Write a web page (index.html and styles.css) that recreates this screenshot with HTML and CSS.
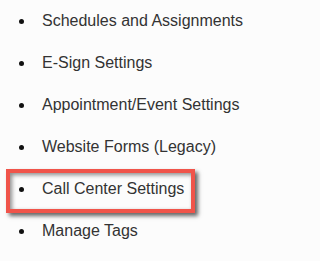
FILE: index.html
```html
<!DOCTYPE html>
<html>
<head>
<meta charset="utf-8">
<link rel="stylesheet" href="styles.css">
</head>
<body>
<ul class="menu">
  <li class="item">Schedules and Assignments</li>
  <li class="item">E-Sign Settings</li>
  <li class="item">Appointment/Event Settings</li>
  <li class="item">Website Forms (Legacy)</li>
  <li class="item highlight">Call Center Settings</li>
  <li class="item">Manage Tags</li>
</ul>
</body>
</html>
```
FILE: styles.css
```css
html, body {
  margin: 0;
  padding: 0;
  background: #fcfcfc;
}
.menu {
  margin: 0;
  padding: 11px 0 0 42px;
  list-style: none;
  font-family: "Liberation Sans", Arial, sans-serif;
  font-size: 16px;
  color: #333;
}
.item {
  position: relative;
  line-height: 20px;
  margin-bottom: 22px;
}
.item::before {
  content: "";
  position: absolute;
  left: -23px;
  top: 8px;
  width: 5px;
  height: 5px;
  border-radius: 50%;
  background: #111;
}
.highlight::after {
  content: "";
  position: absolute;
  left: -36px;
  top: -10px;
  width: 181px;
  height: 36px;
  border: 4px solid #f0544a;
  box-shadow: 3px 3px 4px rgba(0,0,0,0.6), inset 2px 2px 4px rgba(0,0,0,0.45);
}
```
